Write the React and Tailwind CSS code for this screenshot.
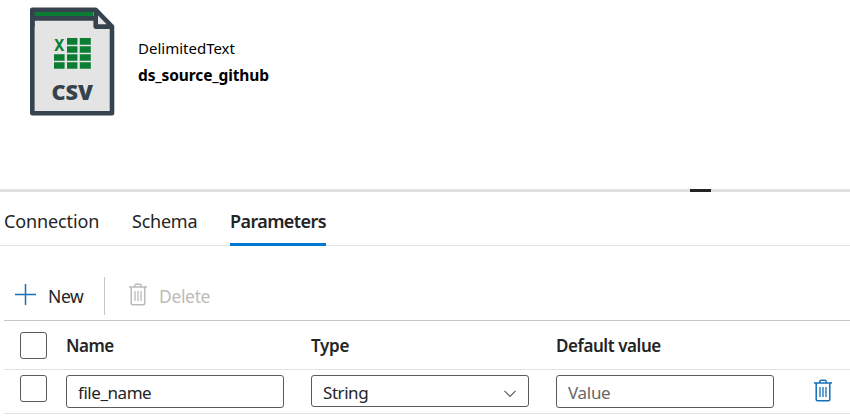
const UI = 'font-["Segoe_UI","Noto_Sans","Open_Sans",sans-serif]';

function CsvFileIcon() {
  return (
    <svg width="86" height="110" viewBox="0 0 86 110" className="block">
      <path d="M3 3H67L83 20V106H3Z" fill="#e4e4e4" />
      <path d="M3 4H64V9.5H3Z" fill="#0a7d33" />
      <path d="M3 11.4H65" stroke="#36424d" strokeWidth="4.6" />
      <path
        d="M3.3 2.7H66.5L83 19.5V106.2H3.3Z M66.7 3V19.6H83"
        fill="none"
        stroke="#36424d"
        strokeWidth="4.6"
        strokeLinejoin="round"
      />
      <path d="M3 5.2H64V8.8H5.6V5.2Z" fill="#0a7d33" />
      <path d="M3.3 2V20" stroke="#36424d" strokeWidth="4.6" />
      <g fill="#0a7d33" transform="translate(1 0)">
        <path d="M37 31h10.4v6.7H37zM49.8 31h11v6.7h-11zM37 39.2h10.4v6.5H37zM49.8 39.2h11v6.5h-11zM24 47.2h10.6v6.5H24zM37 47.2h10.4v6.5H37zM49.8 47.2h11v6.5h-11zM24 55.2h10.6v6.6H24zM37 55.2h10.4v6.6H37zM49.8 55.2h11v6.6h-11z" />
      </g>
      <text x="25.2" y="44" textLength="10" lengthAdjust="spacingAndGlyphs" fontFamily="Noto Sans, sans-serif" fontWeight="700" fontSize="16.5" fill="#0a7d33">X</text>
      <text x="22.4" y="92.8" textLength="41.5" lengthAdjust="spacingAndGlyphs" fontFamily="Open Sans, sans-serif" fontWeight="800" fontSize="21.5" fill="#36424d">CSV</text>
    </svg>
  );
}

function TrashIcon({ className }) {
  return (
    <svg width="18" height="23" viewBox="0 0 18 23" className={className} fill="none" stroke="currentColor" strokeWidth="1.5">
      <path d="M0 4H18M5.8 4V2.6Q5.8 1.2 7.2 1.2H10.8Q12.2 1.2 12.2 2.6V4M2.2 4V20.4Q2.2 21.8 3.6 21.8H14.4Q15.8 21.8 15.8 20.4V4" />
      <path d="M6 8V18M9 8V18M12 8V18" strokeWidth="1.3" />
    </svg>
  );
}

function Checkbox() {
  return <span className="block size-[27px] rounded-[3px] border border-[#5c5a58] bg-white" />;
}

const columns = 'ml-1 grid grid-cols-[16px_46px_245px_245px_258px_1fr]';

export default function App() {
  return (
    <div className={`${UI} h-[418px] w-[850px] overflow-hidden bg-white text-[#242424]`}>
      <header className="flex h-[189px] pl-[29px] pt-[7px] text-black">
        <CsvFileIcon />
        <div className="ml-[23px] pt-7 leading-[27px]">
          <div className="text-[15px]">DelimitedText</div>
          <div className="text-[15.5px] font-bold tracking-[-0.12px]">ds_source_github</div>
        </div>
      </header>
      <div className="flex h-[3px] bg-[#e1e1e1] pl-[690px]">
        <div className="h-[3px] w-[21px] bg-[#242424]" />
      </div>
      <nav className="flex h-[54px] border-b border-[#e1e1e1] pl-1 text-[18px] leading-[58px]">
        <div className="w-32 tracking-[-0.12px]">Connection</div>
        <div className="w-[98px] tracking-[-0.25px]">Schema</div>
        <div className="h-[54px] w-24 whitespace-nowrap border-b-[3px] border-[#0078d4] font-semibold tracking-[-0.6px]">Parameters</div>
      </nav>
      <div className="ml-1 flex h-[75px] border-b border-[#c8c6c4] pl-[11px] pt-[31px] text-[17.5px] leading-[38px]">
        <svg width="21" height="22" viewBox="0 0 21 22" className="mt-[7px]" stroke="#1570b8" strokeWidth="1.5">
          <path d="M0 10.5H21M10.5 0V21" />
        </svg>
        <div className="ml-3 w-14 tracking-[-0.4px]">New</div>
        <div className="h-[38px] w-px bg-[#c8c6c4]" />
        <TrashIcon className="ml-6 mt-[6px] text-[#bdbbb9]" />
        <div className="ml-3 tracking-[-0.35px] text-[#bdbbb9]">Delete</div>
      </div>
      <div className={`${columns} h-[49px] border-b border-[#e1e1e1] text-[17px] font-semibold leading-[50px]`}>
        <span />
        <div className="pt-[11px]"><Checkbox /></div>
        <div className="tracking-[-0.5px]">Name</div>
        <div className="tracking-[-0.3px]">Type</div>
        <div className="tracking-[-0.43px]">Default value</div>
      </div>
      <div className={`${columns} h-11 border-b border-[#e1e1e1] pt-[5px] text-[17px] leading-[34px]`}>
        <span />
        <Checkbox />
        <div className="h-[33px] w-[218px] rounded-[3px] border border-[#5c5a58] pl-[11px] tracking-[-0.45px]">file_name</div>
        <div className="flex h-8 w-[218px] justify-between rounded-[3px] border border-[#5c5a58] pl-[11px] pr-3">
          <span className="tracking-[-0.45px]">String</span>
          <svg width="12" height="8" viewBox="0 0 12 8" className="mt-[14px]" fill="none" stroke="#605e5c" strokeWidth="1.2">
            <path d="M.5 .8L6 6.3L11.5 .8" />
          </svg>
        </div>
        <div className="h-[33px] w-[218px] rounded-[3px] border border-[#5c5a58] pl-[11px] tracking-[-0.3px] text-[#696765]">Value</div>
        <TrashIcon className="mt-1 text-[#1570b8]" />
      </div>
    </div>
  );
}
